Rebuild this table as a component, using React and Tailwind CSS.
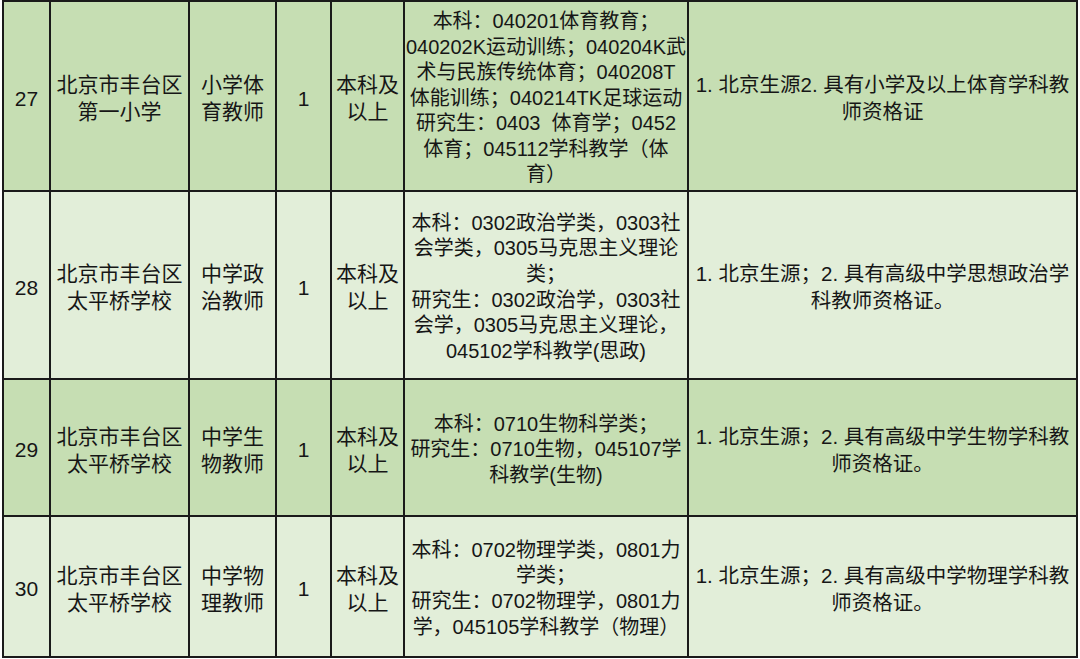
import React from "react";

const rows = [
  {
    no: "27",
    h: "h-[188px]",
    bg: "bg-[#c6deb3]",
    school: ["北京市丰台区", "第一小学"],
    post: ["小学体", "育教师"],
    num: "1",
    edu: ["本科及", "以上"],
    major: [
      "本科：040201体育教育；",
      "040202K运动训练；040204K武",
      "术与民族传统体育；040208T",
      "体能训练；040214TK足球运动",
      "研究生：0403  体育学；0452",
      "体育；045112学科教学（体",
      "育）",
    ],
    req: ["1. 北京生源2. 具有小学及以上体育学科教", "师资格证"],
  },
  {
    no: "28",
    h: "h-[186px]",
    bg: "bg-[#e2eed9]",
    school: ["北京市丰台区", "太平桥学校"],
    post: ["中学政", "治教师"],
    num: "1",
    edu: ["本科及", "以上"],
    major: [
      "本科：0302政治学类，0303社",
      "会学类，0305马克思主义理论",
      "类；",
      "研究生：0302政治学，0303社",
      "会学，0305马克思主义理论，",
      "045102学科教学(思政)",
    ],
    req: ["1. 北京生源；2. 具有高级中学思想政治学", "科教师资格证。"],
  },
  {
    no: "29",
    h: "h-[135px]",
    bg: "bg-[#c6deb3]",
    school: ["北京市丰台区", "太平桥学校"],
    post: ["中学生", "物教师"],
    num: "1",
    edu: ["本科及", "以上"],
    major: ["本科：0710生物科学类；", "研究生：0710生物，045107学", "科教学(生物)"],
    req: ["1. 北京生源；2. 具有高级中学生物学科教", "师资格证。"],
  },
  {
    no: "30",
    h: "h-[139px]",
    bg: "bg-[#e2eed9]",
    school: ["北京市丰台区", "太平桥学校"],
    post: ["中学物", "理教师"],
    num: "1",
    edu: ["本科及", "以上"],
    major: [
      "本科：0702物理学类，0801力",
      "学类；",
      "研究生：0702物理学，0801力",
      "学，045105学科教学（物理）",
    ],
    req: ["1. 北京生源；2. 具有高级中学物理学科教", "师资格证。"],
  },
];

function Cell({ lines, bg, cls = "" }) {
  return (
    <div className={`${bg} flex flex-col items-center justify-center overflow-visible ${cls}`}>
      {lines.map((l, i) => (
        <div key={i} className="whitespace-pre">
          {l}
        </div>
      ))}
    </div>
  );
}

export default function App() {
  return (
    <div
      className="w-[1080px] h-[659px] bg-white text-[#161616]"
      style={{ fontFamily: '"Liberation Sans", "Noto Sans CJK SC", sans-serif' }}
    >
      <div className="ml-[2px] inline-grid grid-cols-[45px_137px_85px_53px_71px_282px_387px] gap-[2px] p-[2px] bg-[#1a1a1a]">
        {rows.map((r) => (
          <React.Fragment key={r.no}>
            <Cell lines={[r.no]} bg={r.bg} cls={`${r.h} text-[21px] leading-[27px] pt-[4px]`} />
            <Cell lines={r.school} bg={r.bg} cls={`${r.h} text-[21px] leading-[27px] pt-[4px]`} />
            <Cell lines={r.post} bg={r.bg} cls={`${r.h} text-[21px] leading-[27px] pt-[4px]`} />
            <Cell lines={[r.num]} bg={r.bg} cls={`${r.h} text-[21px] leading-[27px] pt-[4px]`} />
            <Cell lines={r.edu} bg={r.bg} cls={`${r.h} text-[21px] leading-[27px] pt-[4px]`} />
            <Cell lines={r.major} bg={r.bg} cls={`${r.h} text-[20px] leading-[25.6px] pt-[5px]`} />
            <Cell lines={r.req} bg={r.bg} cls={`${r.h} text-[20.5px] leading-[27px] pt-[4px]`} />
          </React.Fragment>
        ))}
      </div>
    </div>
  );
}
